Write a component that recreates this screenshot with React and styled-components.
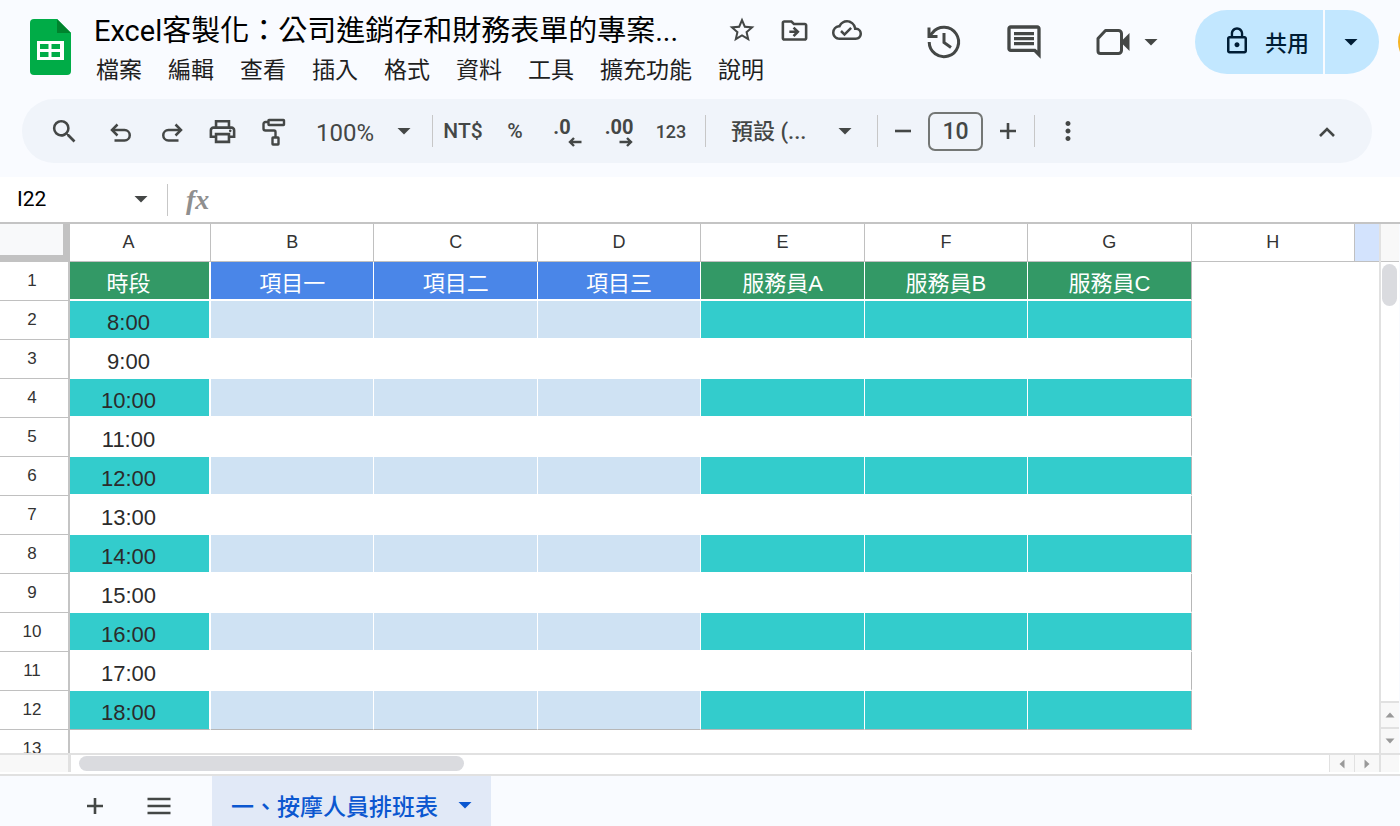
import React, { useState } from "react";
import styled, { createGlobalStyle } from "styled-components";
import {
  MdLockOutline,
  MdMoreVert,
  MdOutlineCloudDone,
  MdOutlineComment,
  MdOutlineDriveFileMove,
  MdOutlinePrint,
  MdSearch,
  MdStarBorder,
} from "react-icons/md";

const GlobalStyle = createGlobalStyle`
  * {
    box-sizing: border-box;
  }

  body {
    margin: 0;
    font-family: Roboto, "Noto Sans CJK TC", sans-serif;
    color: #1f1f1f;
    background: #f9fbff;
  }

  button, input, select {
    margin: 0;
    padding: 0;
    border: 0;
    background: none;
    font: inherit;
    color: inherit;
  }

  button {
    cursor: pointer;
  }

  svg {
    display: block;
    flex-shrink: 0;
  }
`;

const Page = styled.div`
  display: flex;
  flex-direction: column;
  height: 100vh;
  overflow: hidden;
`;

/* ---------- header ---------- */

const Header = styled.header`
  display: flex;
  align-items: flex-start;
  padding: 9px 0 10px 30px;
  overflow: hidden;
`;

const LogoLink = styled.a`
  padding-top: 10px;
  margin-right: 23px;
`;

const DocInfo = styled.div`
  flex: 1;
  min-width: 0;
`;

const TitleRow = styled.div`
  display: flex;
  align-items: center;
`;

const Title = styled.h1`
  margin: 0 49px 0 0;
  font-size: 29px;
  font-weight: 400;
  line-height: 44px;
  white-space: nowrap;
  color: #000;
`;

const TitleActions = styled.div`
  display: flex;
  gap: 22px;
  padding-bottom: 2px;
  color: #444746;
`;

const MenuBar = styled.nav`
  display: flex;
  gap: 26px;
  padding-left: 2px;
`;

const MenuItem = styled.button`
  font-size: 23px;
  line-height: 36px;
  white-space: nowrap;
`;

const HeaderActions = styled.div`
  display: flex;
  align-items: center;
  height: 66px;
  color: #444746;
`;

const HeaderButton = styled.button`
  display: flex;
  align-items: center;
  gap: 13px;
  margin-right: ${(props) => props.$space}px;
`;

const ShareGroup = styled.div`
  display: flex;
  gap: 2px;
  height: 64px;
  border-radius: 32px;
  overflow: hidden;
  color: #001d35;
`;

const ShareButton = styled.button`
  display: flex;
  align-items: center;
  gap: 13px;
  padding: 0 14px 3px 27px;
  background: #c2e7ff;
  font-size: 22px;
  font-weight: 500;
  white-space: nowrap;
`;

const ShareMore = styled.button`
  display: flex;
  align-items: center;
  padding: 0 21px 0 19px;
  background: #c2e7ff;
`;

const Avatar = styled.button`
  width: 52px;
  height: 52px;
  margin: 0 -50px 0 19px;
  border-radius: 50%;
  background: #f5b324;
  flex-shrink: 0;
`;

/* ---------- toolbar ---------- */

const Toolbar = styled.div`
  display: flex;
  align-items: center;
  height: 64px;
  margin: 0 28px 14px 22px;
  padding: 0 20px 0 17px;
  border-radius: 32px;
  background: #f0f4fa;
  color: #444746;
  flex-shrink: 0;
`;

const ToolGroup = styled.div`
  display: flex;
  align-items: center;
  gap: ${(props) => props.$gap || 0}px;
  margin-left: ${(props) => props.$left || 0}px;
`;

const ToolButton = styled.button`
  display: flex;
  align-items: center;
  justify-content: center;
  width: ${(props) => props.$width || 51}px;
  height: 40px;
  font-size: ${(props) => props.$size || 21}px;
  font-weight: 500;
`;

const CollapseButton = styled(ToolButton)`
  margin-left: auto;
`;

const Separator = styled.span`
  width: 1px;
  height: 32px;
  margin: 0 ${(props) => props.$right || 0}px 0 ${(props) => props.$left || 0}px;
  background: #c7c7c7;
`;

const DecimalLabel = styled.span`
  display: flex;
  flex-direction: column;
  align-items: flex-start;
  padding-top: 4px;
  font-size: 20px;
  font-weight: 700;
  line-height: 15px;

  svg {
    align-self: flex-end;
    margin: 2px ${(props) => (props.$wide ? 0 : -11)}px 0 0;
  }
`;

const DecimalButton = styled(ToolButton)`
  padding-right: ${(props) => (props.$wide ? 0 : 10)}px;
`;

const SelectBox = styled.label`
  display: flex;
  align-items: center;
  width: ${(props) => props.$width}px;
  font-size: ${(props) => props.$size}px;
  font-weight: ${(props) => props.$weight || 400};

  select {
    flex: 1;
    min-width: 0;
    padding-top: ${(props) => props.$top || 0}px;
    appearance: none;
    outline: none;
  }
`;

const SizeInput = styled.input`
  width: 55px;
  height: 39px;
  border: 2px solid #747775;
  border-radius: 7px;
  font-size: 23px;
  font-weight: 500;
  text-align: center;
`;

/* ---------- formula bar ---------- */

const FormulaBar = styled.div`
  display: flex;
  align-items: center;
  height: 45px;
  background: #fff;
  flex-shrink: 0;
`;

const NameBox = styled.div`
  display: flex;
  align-items: center;
  width: 167px;
  padding: 0 19px 2px 17px;
  color: #444746;

  input {
    flex: 1;
    min-width: 0;
    font-size: 21px;
    color: #000;
  }
`;

const FxLabel = styled.label`
  width: 38px;
  padding-left: 18px;
  font-family: "Liberation Serif", serif;
  font-size: 28px;
  font-weight: 700;
  font-style: italic;
  line-height: 32px;
  color: #8f8f8f;
`;

const FormulaInput = styled.input`
  flex: 1;
  margin-left: 12px;
  font-size: 21px;
  outline: none;
`;

/* ---------- grid ---------- */

const GridArea = styled.main`
  display: flex;
  flex: 1;
  min-height: 0;
  padding-right: 1px;
  border-top: 2px solid #c4c4c4;
`;

const GridView = styled.div`
  flex: 1;
  min-width: 0;
  overflow: hidden;
  background: #fff;
`;

const Grid = styled.table`
  width: 100%;
  table-layout: fixed;
  border-collapse: separate;
  border-spacing: 0;
  font-family: "Liberation Sans", "Noto Sans CJK TC", sans-serif;

  th, td {
    padding: 0;
    overflow: hidden;
    white-space: nowrap;
  }
`;

const Corner = styled.th`
  height: 38px;
  border: solid #c2c2c2;
  border-width: 0 7px 7px 0;
  background: #f8f9fa;
`;

const ColHead = styled.th`
  height: 38px;
  border-right: 1px solid #c0c0c0;
  border-bottom: 1px solid #c0c0c0;
  background: ${(props) => (props.$selected ? "#d3e3fd" : "#fff")};
  font-size: 18px;
  font-weight: 400;
  color: #333;

  &&:nth-child(2) {
    padding-right: 23px;
  }

  &:last-child {
    border-right: 0;
  }
`;

const RowHead = styled.th`
  height: 39px;
  border-right: 2px solid #c4c4c4;
  border-bottom: 1px solid #c0c0c0;
  font-size: 17px;
  font-weight: 400;
  color: #333;

  && {
    padding-right: 4px;
  }
`;

const Cell = styled.td`
  height: 39px;
  border-right: 1px solid #fff;
  border-bottom: 2px solid #fff;
  background: ${(props) => props.$fill};
  font-size: 22px;
  line-height: 30px;
  text-align: center;
  color: ${(props) => (props.$head ? "#fff" : "#2b2b2b")};

  && {
    padding-top: 6px;
  }

  &&:nth-child(2) {
    padding-right: 22px;
    border-right-width: 2px;
  }

  tr:nth-child(-n + 12) &:nth-child(8) {
    border-right: 1px solid #b7b7b7;
  }

  tr:nth-child(12) &:nth-child(-n + 8) {
    border-bottom: 1px solid #b7b7b7;
  }
`;

/* ---------- scroll bars ---------- */

const VScroll = styled.div`
  display: flex;
  flex-direction: column;
  width: 20px;
  border-left: 2px solid #e1e1e1;
  background: #fff;
`;

const VScrollCap = styled.div`
  height: 38px;
  border-bottom: 1px solid #c4c4c4;
  background: #f8f8f8;
`;

const VTrack = styled.div`
  flex: 1;
  padding: 2px 1px;
`;

const VThumb = styled.div`
  width: 15px;
  height: 42px;
  border-radius: 8px;
  background: #dadbdf;
`;

const VArrow = styled.button`
  display: flex;
  align-items: center;
  justify-content: center;
  height: 26px;
  border-top: 2px solid #e1e1e1;
  background: #f8f8f8;
  color: #999;
`;

const HScroll = styled.div`
  display: flex;
  height: 23px;
  padding: 0 1px 2px 0;
  border-top: 2px solid #e1e1e1;
  border-bottom: 2px solid #e1e1e1;
  background: #fff;
  flex-shrink: 0;
`;

const HScrollCap = styled.div`
  width: ${(props) => props.$width}px;
  border: 0 solid #e1e1e1;
  border-right-width: ${(props) => (props.$end ? 0 : 3)}px;
  border-left-width: ${(props) => (props.$end ? 2 : 0)}px;
  background: #f8f8f8;
`;

const HTrack = styled.div`
  flex: 1;
  padding: 1px 8px;
`;

const HThumb = styled.div`
  width: 31%;
  height: 15px;
  border-radius: 8px;
  background: #dadbdf;
`;

const HArrow = styled.button`
  display: flex;
  align-items: center;
  justify-content: center;
  width: 25px;
  border-left: 1px solid #e1e1e1;
  background: #f8f8f8;
  color: #999;
`;

/* ---------- sheet tabs ---------- */

const SheetBar = styled.footer`
  display: flex;
  height: 50px;
  padding-left: 63px;
  background: #f9fbff;
  color: #444746;
  flex-shrink: 0;
`;

const SheetTool = styled.button`
  display: flex;
  align-items: center;
  justify-content: center;
  width: 64px;
  padding-top: 10px;
`;

const SheetTab = styled.button`
  display: flex;
  align-items: center;
  gap: 20px;
  margin-left: 21px;
  padding: 8px 19px 0 19px;
  background: #e1e9f7;
  font-size: 23px;
  font-weight: 500;
  white-space: nowrap;
  color: #0b57d0;
`;

/* ---------- icons ---------- */

const SheetsLogo = () => (
  <svg width="41" height="56" viewBox="0 0 41 56">
    <path d="M4 0h23l14 14v38a4 4 0 0 1-4 4H4a4 4 0 0 1-4-4V4a4 4 0 0 1 4-4z" fill="#00ac47" />
    <path d="M27 0l14 14H27z" fill="#00832d" />
    <path
      d="M7 22h27v19H7zM10 25v5h8.500v-5zM21.500 25v5H30v-5zM10 33v5h8.500v-5zM21.500 33v5H30v-5z"
      fill="#fff"
      fillRule="evenodd"
    />
  </svg>
);

const Caret = () => (
  <svg width="14" height="8" viewBox="0 0 14 8" fill="currentColor">
    <path d="M0.500 1h13L7 7.500z" />
  </svg>
);

const HistoryIcon = () => (
  <svg width="40" height="40" viewBox="0 0 40 40" fill="none" stroke="currentColor" strokeWidth="3">
    <path d="M5.200 20A14.700 14.700 0 1 0 8.500 10.700L5 14.400" />
    <path d="M5 5.500V14.500H13.500" />
    <path d="M20 11v9.500l7 5" />
  </svg>
);

const MeetIcon = () => (
  <svg width="36" height="30" viewBox="0 0 36 30">
    <path
      d="M10.500 3.500h13a3 3 0 0 1 3 3v17a3 3 0 0 1-3 3h-18a2.500 2.500 0 0 1-2.500-2.500V11.500z"
      fill="none"
      stroke="currentColor"
      strokeWidth="3"
      strokeLinejoin="round"
    />
    <path d="M34.500 6v18l-7.500-7.500v-3z" fill="currentColor" />
  </svg>
);

const TurnIcon = ({ flip }) => (
  <svg width="24" height="24" viewBox="0 0 24 24" fill="none" stroke="currentColor" strokeWidth="2.500">
    <g transform={flip ? "matrix(-1 0 0 1 24 0)" : undefined}>
      <path d="M8.500 5.500L3 11l5.500 5.500" />
      <path d="M3.500 11h12a5.200 5.200 0 0 1 0 10.500H5.500" />
    </g>
  </svg>
);

const RollerIcon = () => (
  <svg width="26" height="30" viewBox="0 0 26 30" fill="none" stroke="currentColor" strokeWidth="2.400">
    <rect x="7.500" y="4" width="15.500" height="5" rx="0.500" />
    <path d="M7.500 6H4.500a2 2 0 0 0-2 2v4.500a2 2 0 0 0 2 2H13a1.500 1.500 0 0 1 1.500 1.500v5" />
    <rect x="11.500" y="21.500" width="6" height="7" rx="0.500" />
  </svg>
);

const ArrowIcon = ({ flip }) => (
  <svg width="14" height="10" viewBox="0 0 14 10" fill="none" stroke="currentColor" strokeWidth="2.400">
    <path d={flip ? "M0.500 5h11M8 1l4 4-4 4" : "M13.500 5h-11M6 1L2 5l4 4"} />
  </svg>
);

const LineIcon = ({ d }) => (
  <svg width="18" height="18" viewBox="0 0 18 18" fill="none" stroke="currentColor" strokeWidth="2.600">
    <path d={d} />
  </svg>
);

const MenuIcon = () => (
  <svg width="24" height="18" viewBox="0 0 24 18" fill="none" stroke="currentColor" strokeWidth="2.500">
    <path d="M0.500 2h23M0.500 9h23M0.500 16h23" />
  </svg>
);

const TRIANGLES = {
  up: "M5 2.500l4.500 5h-9z",
  down: "M5 7.500l4.500-5h-9z",
  left: "M2.500 5l5-4.500v9z",
  right: "M7.500 5l-5-4.500v9z",
};

const Triangle = ({ dir }) => (
  <svg width="10" height="10" viewBox="0 0 10 10" fill="currentColor">
    <path d={TRIANGLES[dir]} />
  </svg>
);

/* ---------- data ---------- */

const menus = ["檔案", "編輯", "查看", "插入", "格式", "資料", "工具", "擴充功能", "說明"];
const columns = ["A", "B", "C", "D", "E", "F", "G", "H", ""];
const heads = ["時段", "項目一", "項目二", "項目三", "服務員A", "服務員B", "服務員C"];
const hours = [8, 9, 10, 11, 12, 13, 14, 15, 16, 17, 18];

const rows = [
  heads,
  ...hours.map((hour) => [`${hour}:00`]),
  [],
];

const isItem = (col) => col >= 1 && col <= 3;

const cellFill = (row, col) => {
  if (col > 6 || row > 11) return "#fff";
  if (row === 0) return isItem(col) ? "#4a86e8" : "#339966";
  if (row % 2 === 0) return "#fff";
  return isItem(col) ? "#cfe2f3" : "#33cccc";
};

const App = () => {
  const [fontSize, setFontSize] = useState(10);
  const [cellName, setCellName] = useState("I22");
  const [formula, setFormula] = useState("");

  return (
    <Page>
      <GlobalStyle />
      <Header>
        <LogoLink href="#" aria-label="試算表首頁">
          <SheetsLogo />
        </LogoLink>
        <DocInfo>
          <TitleRow>
            <Title>Excel客製化：公司進銷存和財務表單的專案...</Title>
            <TitleActions>
              <button aria-label="加上星號"><MdStarBorder size={30} /></button>
              <button aria-label="移動"><MdOutlineDriveFileMove size={31} /></button>
              <button aria-label="雲端狀態"><MdOutlineCloudDone size={30} /></button>
            </TitleActions>
          </TitleRow>
          <MenuBar>
            {menus.map((menu) => (
              <MenuItem key={menu}>{menu}</MenuItem>
            ))}
          </MenuBar>
        </DocInfo>
        <HeaderActions>
          <HeaderButton $space={40} aria-label="版本記錄"><HistoryIcon /></HeaderButton>
          <HeaderButton $space={51} aria-label="留言"><MdOutlineComment size={40} /></HeaderButton>
          <HeaderButton $space={37} aria-label="視訊通話">
            <MeetIcon />
            <Caret />
          </HeaderButton>
          <ShareGroup>
            <ShareButton>
              <MdLockOutline size={30} />
              共用
            </ShareButton>
            <ShareMore aria-label="共用選項"><Caret /></ShareMore>
          </ShareGroup>
          <Avatar aria-label="帳戶" />
        </HeaderActions>
      </Header>

      <Toolbar role="toolbar">
        <ToolButton aria-label="搜尋"><MdSearch size={31} /></ToolButton>
        <ToolGroup $left={5}>
          <ToolButton aria-label="復原"><TurnIcon /></ToolButton>
          <ToolButton aria-label="取消復原"><TurnIcon flip /></ToolButton>
          <ToolButton aria-label="列印"><MdOutlinePrint size={31} /></ToolButton>
          <ToolButton aria-label="複製格式"><RollerIcon /></ToolButton>
        </ToolGroup>
        <ToolGroup $left={17}>
          <SelectBox $width={95} $size={24} $top={3}>
            <select aria-label="縮放"><option>100%</option></select>
            <Caret />
          </SelectBox>
        </ToolGroup>
        <Separator $left={21} $right={4} />
        <ToolButton $width={52}>NT$</ToolButton>
        <ToolButton $width={52}>%</ToolButton>
        <DecimalButton $width={52} aria-label="減少小數位數">
          <DecimalLabel>.0<ArrowIcon /></DecimalLabel>
        </DecimalButton>
        <DecimalButton $width={52} $wide aria-label="增加小數位數">
          <DecimalLabel $wide>.00<ArrowIcon flip /></DecimalLabel>
        </DecimalButton>
        <ToolButton $width={52} $size={18}>123</ToolButton>
        <Separator $left={8} $right={25} />
        <SelectBox $width={121} $size={22} $weight={500}>
          <select aria-label="字型"><option>預設 (...</option></select>
          <Caret />
        </SelectBox>
        <Separator $left={25} $right={9} />
        <ToolGroup $gap={9}>
          <ToolButton $width={32} aria-label="縮小字型" onClick={() => setFontSize(Number(fontSize) - 1)}>
            <LineIcon d="M1 9h16" />
          </ToolButton>
          <SizeInput
            aria-label="字型大小"
            value={fontSize}
            onChange={(e) => setFontSize(e.target.value)}
          />
          <ToolButton $width={32} aria-label="放大字型" onClick={() => setFontSize(Number(fontSize) + 1)}>
            <LineIcon d="M1 9h16M9 1v16" />
          </ToolButton>
        </ToolGroup>
        <Separator $left={10} $right={7} />
        <ToolButton aria-label="更多"><MdMoreVert size={30} /></ToolButton>
        <CollapseButton aria-label="隱藏選單"><LineIcon d="M2 14l7-7 7 7" /></CollapseButton>
      </Toolbar>

      <FormulaBar>
        <NameBox>
          <input
            aria-label="名稱方塊"
            value={cellName}
            onChange={(e) => setCellName(e.target.value)}
          />
          <button aria-label="已命名範圍"><Caret /></button>
        </NameBox>
        <Separator />
        <FxLabel htmlFor="formula">fx</FxLabel>
        <FormulaInput id="formula" value={formula} onChange={(e) => setFormula(e.target.value)} />
      </FormulaBar>

      <GridArea>
        <GridView>
          <Grid>
            <colgroup>
              <col width="70" />
              <col width="141" />
              <col span="7" />
              <col width="24" />
            </colgroup>
            <thead>
              <tr>
                <Corner />
                {columns.map((name, i) => (
                  <ColHead key={i} scope="col" $selected={name === ""}>{name}</ColHead>
                ))}
              </tr>
            </thead>
            <tbody>
              {rows.map((row, r) => (
                <tr key={r}>
                  <RowHead scope="row">{r + 1}</RowHead>
                  {columns.map((_, c) => (
                    <Cell key={c} $fill={cellFill(r, c)} $head={r === 0}>{row[c]}</Cell>
                  ))}
                </tr>
              ))}
            </tbody>
          </Grid>
        </GridView>
        <VScroll>
          <VScrollCap />
          <VTrack><VThumb /></VTrack>
          <VArrow aria-label="向上捲動"><Triangle dir="up" /></VArrow>
          <VArrow aria-label="向下捲動"><Triangle dir="down" /></VArrow>
        </VScroll>
      </GridArea>
      <HScroll>
        <HScrollCap $width={71} />
        <HTrack><HThumb /></HTrack>
        <HArrow aria-label="向左捲動"><Triangle dir="left" /></HArrow>
        <HArrow aria-label="向右捲動"><Triangle dir="right" /></HArrow>
        <HScrollCap $end $width={20} />
      </HScroll>

      <SheetBar>
        <SheetTool aria-label="新增工作表"><LineIcon d="M1 9h16M9 1v16" /></SheetTool>
        <SheetTool aria-label="所有工作表"><MenuIcon /></SheetTool>
        <SheetTab>
          一、按摩人員排班表
          <Caret />
        </SheetTab>
      </SheetBar>
    </Page>
  );
};

export default App;
